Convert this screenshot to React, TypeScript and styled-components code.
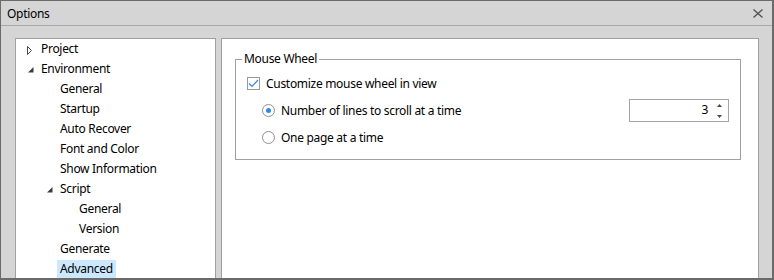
import React from "react";
import styled, { createGlobalStyle } from "styled-components";

const Global = createGlobalStyle`
  html, body { margin: 0; padding: 0; background: #ffffff; }
  body {
    font-family: "Noto Sans", "Segoe UI", sans-serif;
    font-size: 12px;
    letter-spacing: -0.3px;
    color: #000000;
  }
  * { box-sizing: border-box; }
`;

const Window = styled.div`
  width: 774px;
  height: 280px;
  display: flex;
  flex-direction: column;
  background: #d5d5d5;
  border-style: solid;
  border-color: #6b6b6b;
  border-width: 1px 2px 2px 1px;
  overflow: hidden;
`;

const TitleBar = styled.div`
  height: 25px;
  flex: 0 0 25px;
  display: flex;
  align-items: center;
  justify-content: space-between;
  padding: 2px 9px 0 6px;
  border-bottom: 1px solid #a8a8a8;
  font-size: 12px;
  line-height: 16px;
`;

const CloseButton = styled.svg`
  display: block;
  margin-top: -1px;
`;

const Body = styled.div`
  flex: 1;
  min-height: 0;
  display: flex;
  gap: 5px;
  padding: 12px 13px 0 14px;
`;

const Panel = styled.div<{ $width: number }>`
  flex: 0 0 ${(p) => p.$width}px;
  background: #ffffff;
  border: 1px solid #a0a0a0;
  border-bottom: none;
  overflow: hidden;
`;

const Tree = styled.ul`
  list-style: none;
  margin: 0;
  padding: 0;
`;

const TreeRow = styled.li<{ $level: number }>`
  height: 20px;
  display: flex;
  align-items: center;
  padding-left: ${(p) => 6 + p.$level * 19}px;
`;

const Expander = styled.span`
  flex: 0 0 19px;
  height: 20px;
  display: flex;
  align-items: center;
`;

const ExpIcon = styled.svg<{ $x: number }>`
  display: block;
  margin-left: ${(p) => p.$x}px;
  margin-top: 2px;
`;

const Label = styled.span<{ $selected?: boolean }>`
  line-height: 18px;
  padding: 0 3px;
  margin-left: -3px;
  white-space: nowrap;
  background: ${(p) => (p.$selected ? "#cce8ff" : "transparent")};
`;

const Content = styled.div`
  padding: 12px 17px 0 13px;
`;

const Group = styled.fieldset`
  margin: 0;
  padding: 5px 11px 10px 6px;
  border: 1px solid #a0a0a0;
  min-width: 0;
`;

const Legend = styled.legend`
  padding: 0 2px;
  line-height: 16px;
`;

const Options = styled.div`
  display: flex;
  flex-direction: column;
  gap: 4px;
  padding-left: 5px;
`;

const OptionRow = styled.div<{ $indent?: number }>`
  height: 23px;
  display: flex;
  align-items: center;
  padding-left: ${(p) => p.$indent ?? 0}px;
`;

const CheckBox = styled.span`
  width: 13px;
  height: 13px;
  border: 1px solid #999999;
  background: #ffffff;
  display: flex;
  align-items: center;
  justify-content: center;
  margin-right: 6px;
`;

const Radio = styled.span<{ $checked?: boolean }>`
  width: 13px;
  height: 13px;
  border-radius: 50%;
  border: 1px solid #8f8f8f;
  background: #ffffff;
  display: flex;
  align-items: center;
  justify-content: center;
  margin-right: 6px;
  &::after {
    content: "";
    display: ${(p) => (p.$checked ? "block" : "none")};
    width: 5px;
    height: 5px;
    border-radius: 50%;
    background: #2f86e3;
  }
`;

const OptionText = styled.span`
  white-space: nowrap;
  line-height: 16px;
`;

const Spin = styled.div`
  margin-left: auto;
  width: 100px;
  height: 23px;
  border: 1px solid #a5a5a5;
  display: flex;
  background: #ffffff;
`;

const SpinValue = styled.span`
  flex: 1;
  text-align: right;
  line-height: 20px;
  padding-right: 1px;
`;

const SpinButtons = styled.div`
  flex: 0 0 19px;
  display: flex;
  flex-direction: column;
  align-items: center;
  justify-content: space-between;
  padding: 4px 0 3px 1px;
`;

type Node = { label: string; level: number; exp?: "open" | "closed"; selected?: boolean };

const nodes: Node[] = [
  { label: "Project", level: 0, exp: "closed" },
  { label: "Environment", level: 0, exp: "open" },
  { label: "General", level: 1 },
  { label: "Startup", level: 1 },
  { label: "Auto Recover", level: 1 },
  { label: "Font and Color", level: 1 },
  { label: "Show Information", level: 1 },
  { label: "Script", level: 1, exp: "open" },
  { label: "General", level: 2 },
  { label: "Version", level: 2 },
  { label: "Generate", level: 1 },
  { label: "Advanced", level: 1, selected: true },
];

const ClosedArrow = () => (
  <ExpIcon $x={5} width="6" height="9" viewBox="0 0 6 9">
    <polygon points="0.5,0.5 4.5,4.5 0.5,8.5" fill="none" stroke="#4a4a4a" strokeWidth="1" />
  </ExpIcon>
);

const OpenArrow = () => (
  <ExpIcon $x={6} width="6" height="6" viewBox="0 0 6 6">
    <polygon points="5.5,0 5.5,5.5 0,5.5" fill="#3c3c3c" />
  </ExpIcon>
);

export default function App() {
  return (
    <>
      <Global />
      <Window>
        <TitleBar>
          <span>Options</span>
          <CloseButton width="10" height="9" viewBox="0 0 10 9">
            <path d="M0.5 0.5 L9.5 8.5 M9.5 0.5 L0.5 8.5" stroke="#505050" strokeWidth="1.3" fill="none" />
          </CloseButton>
        </TitleBar>
        <Body>
          <Panel $width={201}>
            <Tree>
              {nodes.map((n, i) => (
                <TreeRow key={i} $level={n.level}>
                  <Expander>
                    {n.exp === "closed" && <ClosedArrow />}
                    {n.exp === "open" && <OpenArrow />}
                  </Expander>
                  <Label $selected={n.selected}>{n.label}</Label>
                </TreeRow>
              ))}
            </Tree>
          </Panel>
          <Panel $width={538}>
            <Content>
              <Group>
                <Legend>Mouse Wheel</Legend>
                <Options>
                  <OptionRow>
                    <CheckBox>
                      <svg width="11" height="9" viewBox="0 0 11 9">
                        <path d="M1 4.5 L4 7.5 L10 1" stroke="#3b86dc" strokeWidth="1.2" fill="none" />
                      </svg>
                    </CheckBox>
                    <OptionText>Customize mouse wheel in view</OptionText>
                  </OptionRow>
                  <OptionRow $indent={15}>
                    <Radio $checked />
                    <OptionText>Number of lines to scroll at a time</OptionText>
                    <Spin>
                      <SpinValue>3</SpinValue>
                      <SpinButtons>
                        <svg width="5" height="3" viewBox="0 0 5 3">
                          <polygon points="2.5,0 5,3 0,3" fill="#4a4a4a" />
                        </svg>
                        <svg width="5" height="3" viewBox="0 0 5 3">
                          <polygon points="0,0 5,0 2.5,3" fill="#4a4a4a" />
                        </svg>
                      </SpinButtons>
                    </Spin>
                  </OptionRow>
                  <OptionRow $indent={15}>
                    <Radio />
                    <OptionText>One page at a time</OptionText>
                  </OptionRow>
                </Options>
              </Group>
            </Content>
          </Panel>
        </Body>
      </Window>
    </>
  );
}
